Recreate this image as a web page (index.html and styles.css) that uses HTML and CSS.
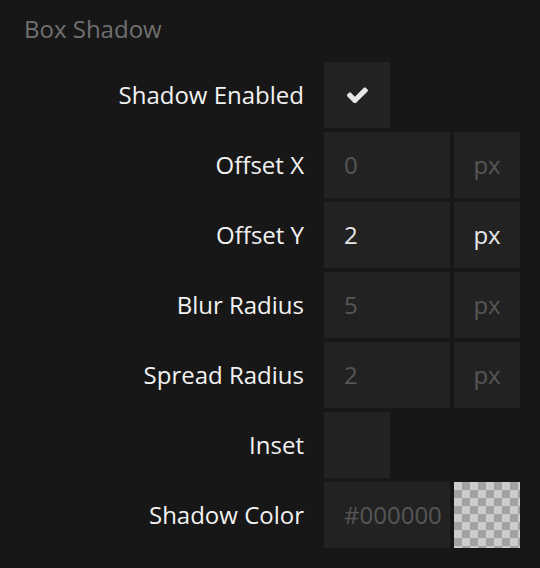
FILE: index.html
```html
<!DOCTYPE html>
<html>
<head>
<meta charset="utf-8">
<link rel="stylesheet" href="styles.css">
</head>
<body>
<div class="panel">
  <div class="title">Box Shadow</div>
  <div class="rows">
    <div class="label">Shadow Enabled</div>
    <div class="box check">
      <svg class="tick" viewBox="140 310 1531 1172" width="21" height="16"><path fill="#e6e6e6" d="M1671 566q0 40-28 68l-724 724-136 136q-28 28-68 28t-68-28l-136-136-362-362q-28-28-28-68t28-68l136-136q28-28 68-28t68 28l294 295 656-657q28-28 68-28t68 28l136 136q28 28 28 68z"/></svg>
    </div>
    <div></div>

    <div class="label">Offset X</div>
    <div class="box field dim">0</div>
    <div class="box unit dim">px</div>

    <div class="label">Offset Y</div>
    <div class="box field">2</div>
    <div class="box unit">px</div>

    <div class="label">Blur Radius</div>
    <div class="box field dim">5</div>
    <div class="box unit dim">px</div>

    <div class="label">Spread Radius</div>
    <div class="box field dim">2</div>
    <div class="box unit dim">px</div>

    <div class="label">Inset</div>
    <div class="box check"></div>
    <div></div>

    <div class="label">Shadow Color</div>
    <div class="box field dim">#000000</div>
    <div class="swatch"></div>
  </div>
</div>
</body>
</html>
```

FILE: styles.css
```css
html, body {
  margin: 0;
  padding: 0;
  background: #171717;
}
body {
  font-family: "Open Sans", "DejaVu Sans", sans-serif;
  font-size: 24px;
  width: 540px;
  height: 568px;
  overflow: hidden;
}
.panel {
  padding: 13px 20px 0 24px;
}
.title {
  color: #707070;
  line-height: 32px;
  margin-bottom: 17px;
}
.rows {
  display: grid;
  grid-template-columns: 296px 126px 66px;
  grid-auto-rows: 66px;
  column-gap: 4px;
  row-gap: 4px;
}
.label {
  color: #f2f2f2;
  text-align: right;
  display: flex;
  align-items: center;
  justify-content: flex-end;
  margin-right: 16px;
  padding-bottom: 2px;
}
.box {
  background: #222222;
  display: flex;
  align-items: center;
  color: #e6e6e6;
}
.field,
.unit {
  padding-bottom: 2px;
}
.field {
  padding-left: 20px;
}
.unit {
  justify-content: center;
}
.dim {
  color: #565656;
}
.check {
  width: 66px;
  justify-content: center;
}
.tick {
  display: block;
}
.swatch {
  background: repeating-conic-gradient(#a2a2a2 0 25%, #cccccc 0 50%) 0 0 / 16px 16px;
}
```
